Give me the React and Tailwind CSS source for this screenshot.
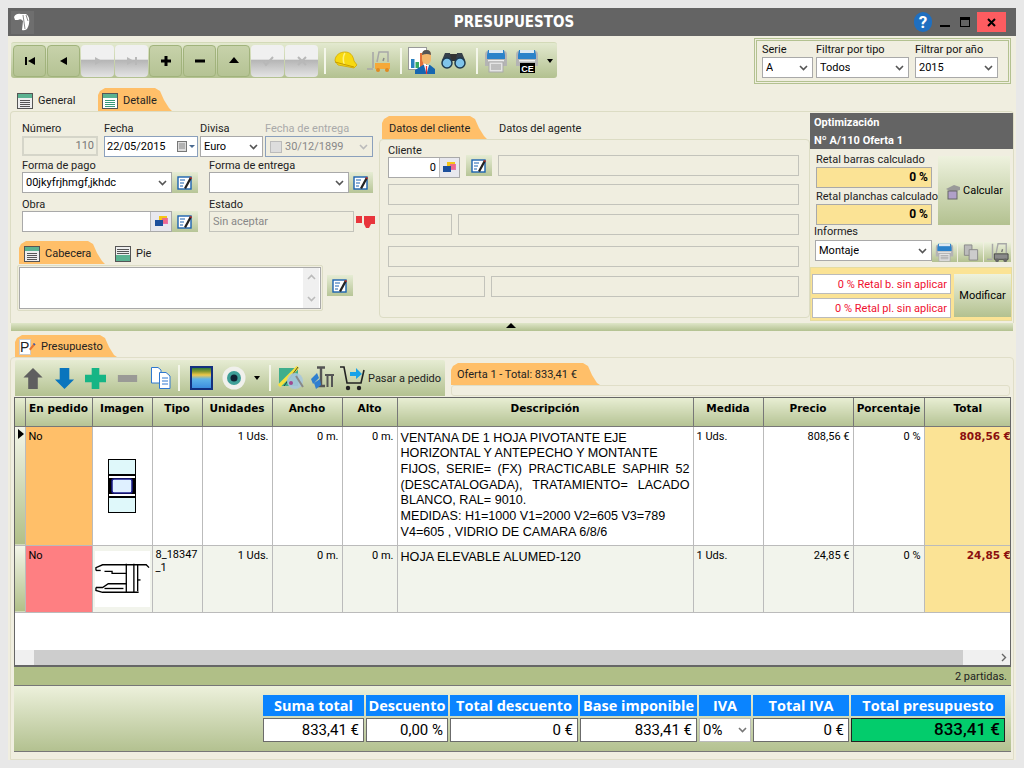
const fontBase = "font-['Roboto','Liberation_Sans',sans-serif]";

function TableIcon({ active, band = "top" }) {
  return (
    <svg width="16" height="16" viewBox="0 0 16 16" className="shrink-0">
      <rect x="0.5" y="0.5" width="15" height="15" fill={active ? "#fff" : "#eee"} stroke="#555" />
      {band === "top" && <rect x="1" y="1" width="14" height="4" fill="#5bb291" />}
      {band === "bottom" && <rect x="1" y="9" width="14" height="6" fill="#5bb291" />}
      {band === "top" ? (
        <path d="M3 7.5H13M3 9.5H13M3 11.5H13M3 13.5H13" stroke={active ? "#3a9a78" : "#555"} />
      ) : (
        <path d="M2 3.5H14M2 5.5H14M2 7.5H14" stroke="#555" />
      )}
    </svg>
  );
}

function EditIcon() {
  return (
    <svg width="16" height="14" viewBox="0 0 16 14">
      <rect x="1" y="1" width="13" height="12" fill="#fff" stroke="#1a62b0" strokeWidth="1.4" />
      <path d="M3 4H8M3 7H7M3 10H6" stroke="#1a62b0" />
      <path d="M7 12L13 1L15 2L9 13Z" fill="#222" />
      <path d="M13 1L15 2L14.5 3L12.5 2Z" fill="#d33" />
    </svg>
  );
}

function FolderIcon() {
  return (
    <svg width="13" height="11" viewBox="0 0 13 11">
      <path d="M4 0H12V7H4Z" fill="#f5c518" />
      <path d="M7 2H13V8H7Z" fill="#ec5aa0" opacity="0.85" />
      <path d="M0 4H8V10H0Z" fill="#1c4f9c" />
    </svg>
  );
}

function EditButton({ w = "w-[26px]" }) {
  return (
    <div className={`${w} h-[21px] flex items-center justify-center bg-linear-to-b from-[#e6ecd4] to-[#b7c597]`}>
      <EditIcon />
    </div>
  );
}

function Chevron({ color = "#555" }) {
  return (
    <svg width="9" height="6" viewBox="0 0 9 6" className="shrink-0">
      <path d="M1 1L4.5 4.5L8 1" fill="none" stroke={color} strokeWidth="1.6" />
    </svg>
  );
}

function Select({ className = "", children, color }) {
  return (
    <div className={`h-[21px] bg-white border border-[#a9a9a9] flex items-center justify-between pl-[3px] pr-[4px] text-[11px] text-black ${className}`}>
      <span className="truncate pt-[1px]">{children}</span>
      <Chevron color={color} />
    </div>
  );
}

function Empty({ className = "" }) {
  return <div className={`h-[21px] border border-[#c3c3bb] bg-[#f0eee0] ${className}`} />;
}

function NavButton({ children, off }) {
  return (
    <div
      className={
        off
          ? "w-[33px] h-[32px] rounded-[4px] flex items-center justify-center bg-[linear-gradient(#f0f0f0_0,#f0f0f0_45%,#b4b4b4_46%,#e4e4e4_100%)]"
          : "w-[33px] h-[32px] rounded-[4px] border border-[#a1b37c] flex items-center justify-center bg-linear-to-b from-[#c7d2aa] to-[#b5c394]"
      }
    >
      {children}
    </div>
  );
}

function Sep() {
  return <div className="w-[2px] h-[26px] bg-[#f4f6ea] shrink-0" />;
}

function Glyph({ d, fill = "#000", size = 14 }) {
  return (
    <svg width={size} height={size} viewBox="0 0 14 14">
      <path d={d} fill={fill} />
    </svg>
  );
}

function Helmet() {
  return (
    <svg width="24" height="19" viewBox="0 0 24 19">
      <path d="M1 10C1 4 6 1 11 1C16 1 19 4 20 10L23 14L20 17L15 16L4 14Z" fill="#f7d911" stroke="#d2a800" strokeWidth="0.8" />
      <path d="M11 2C9 5 9 9 10 13" fill="none" stroke="#fff27a" strokeWidth="1.5" />
      <path d="M1 11L20 16" fill="none" stroke="#c69a00" />
    </svg>
  );
}

function Forklift({ dim, size = 24 }) {
  return (
    <svg width={size} height={size} viewBox="0 0 24 24">
      <path d="M6 19V3" stroke="#a8a8a8" strokeWidth="1.6" />
      <path d="M0 20H6" stroke="#a8a8a8" strokeWidth="1.6" />
      <path d="M10 13L12 3H21V13" fill="none" stroke="#a8a8a8" strokeWidth="1.5" />
      <path d="M16 12L17 9" stroke={dim ? "#777" : "#888"} strokeWidth="1.5" />
      <path d="M8 14H23V20H8Z" fill={dim ? "#8a8a8a" : "#f5a938"} stroke={dim ? "#444" : "none"} />
      <circle cx="11" cy="21" r="2" fill={dim ? "#666" : "#e08a20"} />
      <circle cx="20" cy="21" r="2" fill={dim ? "#666" : "#e08a20"} />
    </svg>
  );
}

function ChartMan() {
  return (
    <svg width="28" height="28" viewBox="0 0 28 28">
      <rect x="0.5" y="0.5" width="18" height="22" fill="#fff" stroke="#999" />
      <rect x="3" y="12" width="3.5" height="9" fill="#2a80c0" />
      <rect x="7.5" y="15" width="3.5" height="6" fill="#36a860" />
      <rect x="12" y="6" width="3.5" height="15" fill="#e2703a" />
      <path d="M14 8Q14 3 18.5 3Q23 3 23 8V12Q23 17 18.5 17Q14 17 14 12Z" fill="#f3b76c" />
      <path d="M14 8Q14 3 18.5 3Q23 3 23 8Q19 6 14 8Z" fill="#555" />
      <path d="M7 27V23L15 18H22L27 22V27Z" fill="#1766b0" />
      <path d="M16 18L18.5 27L21 18Z" fill="#fff" />
      <path d="M18.5 19V27" stroke="#e33" strokeWidth="1.3" />
    </svg>
  );
}

function Binoculars() {
  return (
    <svg width="27" height="17" viewBox="0 0 27 17">
      <path d="M9 2H18V9H9Z" fill="#333" />
      <path d="M5 1H10L11 8H2Z M17 1H22L25 8H16Z" fill="#36404a" />
      <circle cx="7" cy="11" r="5" fill="#7fc4ea" stroke="#1e3a50" strokeWidth="1.5" />
      <circle cx="20" cy="11" r="5" fill="#7fc4ea" stroke="#1e3a50" strokeWidth="1.5" />
    </svg>
  );
}

function Printer({ ce, size = 24 }) {
  return (
    <svg width={size} height={size} viewBox="0 0 24 24">
      <path d="M1 6Q1 2 4 2H20Q23 2 23 6V17H1Z" fill="#b4b4b4" />
      <path d="M4 1H20L21 6V10H3V6Z" fill="#2c82c9" />
      <rect x="5" y="1" width="14" height="3" fill="#dce8f2" />
      <rect x="4" y="11" width="16" height="1.5" fill="#eee" />
      {ce ? (
        <>
          <rect x="5" y="14" width="15" height="10" fill="#000" />
          <text x="12.5" y="22.5" fontSize="9" fontWeight="bold" fill="#fff" textAnchor="middle" fontFamily="Liberation Sans">CE</text>
        </>
      ) : (
        <>
          <rect x="5" y="13" width="14" height="10" fill="#e4e4e4" stroke="#aaa" />
          <path d="M7 16H17M7 18H17M7 20H17" stroke="#999" />
        </>
      )}
    </svg>
  );
}

function Tab({ active, icon, children, className = "", text = "text-[#222]" }) {
  return (
    <div
      className={`h-full flex items-center gap-[5px] whitespace-nowrap pt-[3px] ${text} ${className} ${
        active
          ? "bg-[#ffbf69] [clip-path:polygon(0_100%,0_7px,2px_3px,7px_0,calc(100%_-_17px)_0,calc(100%_-_12px)_3px,calc(100%_-_8px)_12px,calc(100%_-_3px)_20px,100%_100%)]"
          : ""
      }`}
    >
      {icon}
      <span>{children}</span>
    </div>
  );
}

const thCols = [
  ["", 10],
  ["En pedido", 67],
  ["Imagen", 60],
  ["Tipo", 50],
  ["Unidades", 70],
  ["Ancho", 70],
  ["Alto", 55],
  ["Descripción", 296],
  ["Medida", 70],
  ["Precio", 90],
  ["Porcentaje", 71],
  ["Total", 87],
];

function WindowThumb() {
  return (
    <svg width="28" height="54" viewBox="0 0 28 54">
      <rect x="0.5" y="0.5" width="27" height="53" fill="#dff8fa" stroke="#000" />
      <rect x="1" y="15" width="26" height="24" fill="#000" />
      <rect x="1" y="17" width="26" height="2" fill="#fff" />
      <rect x="1" y="35" width="26" height="2" fill="#fff" />
      <rect x="4" y="20" width="20" height="14" rx="2" fill="#dff0ff" stroke="#1a1a8c" strokeWidth="1.5" />
    </svg>
  );
}

function ProfileThumb() {
  return (
    <svg width="58" height="34" viewBox="0 0 58 34" fill="none" stroke="#000" strokeWidth="1.4">
      <path d="M1 8V5L8 2H54L57 5" />
      <path d="M1 8H6" />
      <path d="M10 9H18V11H33" />
      <path d="M33 1V31M41 1V31M45 2V30" />
      <path d="M1 26V29L8 31H46" />
      <path d="M1 26H8L14 22H33" />
      <path d="M10 27H30" />
      <path d="M45 18H48" />
    </svg>
  );
}

function Cell({ children, right, className = "" }) {
  return (
    <td className={`align-top border-r border-b border-[#bbbbbb] px-[3px] pt-[2px] text-[11px] text-black ${right ? "text-right" : ""} ${className}`}>
      {children}
    </td>
  );
}

function Row({ h, color, bg, thumb, tipo, desc, medida, precio, total, marker }) {
  return (
    <tr className={bg} style={{ height: h }}>
      <td className="border-r border-b border-[#bbbbbb] p-0 bg-linear-to-b from-[#f4f6ea] to-[#b0bf87] align-top">
        {marker && (
          <svg width="8" height="12" viewBox="0 0 8 12" className="mt-[1px] ml-[2px]">
            <path d="M1 1L7 6L1 11Z" fill="#000" />
          </svg>
        )}
      </td>
      <Cell className={color}>No</Cell>
      <td className="border-r border-b border-[#bbbbbb] p-0 text-center align-middle">{thumb}</td>
      <Cell className="break-all leading-[13px]">{tipo}</Cell>
      <Cell right>1 Uds.</Cell>
      <Cell right>0 m.</Cell>
      <Cell right>0 m.</Cell>
      <Cell className="font-['Liberation_Sans',sans-serif] !text-[12.6px] leading-[15.7px] !pt-[4px] !pl-[3px]">{desc}</Cell>
      <Cell>{medida}</Cell>
      <Cell right>{precio}</Cell>
      <Cell right>0 %</Cell>
      <td className="align-top border-b border-[#bbbbbb] bg-[#fbe395] pt-[2px] text-right whitespace-nowrap overflow-hidden text-[10.5px] font-bold text-[#8a0f0f] font-['DejaVu_Sans',sans-serif] pr-0">
        {total}
      </td>
    </tr>
  );
}

function TotalCol({ w, label, value, children, className = "bg-white border-[#6b6b6b] text-black text-[15px]" }) {
  return (
    <div className={`${w} shrink-0 flex flex-col gap-[2px]`}>
      <div className="h-[21px] bg-[#0a84ff] text-white font-bold text-[14.5px] leading-[21px] text-center whitespace-nowrap overflow-hidden font-['Open_Sans','Noto_Sans',sans-serif]">
        {label}
      </div>
      {children || (
        <div className={`h-[24px] border flex items-center justify-end pr-[4px] ${className}`}>{value}</div>
      )}
    </div>
  );
}

export default function App() {
  return (
    <div className={`w-[1024px] h-[768px] overflow-hidden bg-[#e8e8e8] pt-[8px] px-[8px] ${fontBase}`}>
      <div className="w-[1008px] h-[752px] bg-[#f0eee0] flex flex-col text-[11px] text-[#222]">
        {/* title bar */}
        <div className="h-[28px] bg-[#646464] flex items-center shrink-0">
          <div className="w-[23px] h-[23px] ml-[3px] bg-[#6e6e6e] flex items-center justify-center">
            <svg width="20" height="20" viewBox="0 0 20 20">
              <path d="M1 5Q3 1 8 2H13Q15 3 16 6Q17 12 14 17Q11 19 9 18L10 9Q8 6 5 8L2 8Z" fill="#fff" />
              <path d="M10 3L12 17M13 3L15 9" stroke="#6e6e6e" strokeWidth="0.8" />
            </svg>
          </div>
          <div className="flex-1 text-center text-white font-bold text-[15px] font-['DejaVu_Sans_Condensed','DejaVu_Sans',sans-serif] pl-[80px]">
            PRESUPUESTOS
          </div>
          <div className="flex items-center mr-[10px]">
            <div className="w-[18px] h-[20px] rounded-full bg-[#1f6fc0] text-white font-bold text-[17px] leading-[20px] text-center">?</div>
            <div className="w-[10px] h-[2px] bg-black ml-[8px] mt-[8px]" />
            <div className="w-[10px] h-[10px] border border-black border-t-[3px] ml-[10px]" />
            <div className="w-[29px] h-[20px] bg-[#fd5c60] ml-[7px] flex items-center justify-center">
              <svg width="9" height="9" viewBox="0 0 9 9">
                <path d="M1 1L8 8M8 1L1 8" stroke="#000" strokeWidth="2" />
              </svg>
            </div>
          </div>
        </div>

        {/* toolbar row */}
        <div className="h-[52px] shrink-0 flex">
          <div className="ml-[3px] mt-[6px] w-[546px] h-[36px] rounded-[3px] bg-linear-to-b from-[#e3e9cf] to-[#b3c190] flex items-center pl-[2px] gap-[1px] border-t border-[#d3dab8]">
            <NavButton><Glyph d="M2 3H4V11H2ZM12 3V11L5 7Z" size={14} /></NavButton>
            <NavButton><Glyph d="M10 3V11L3 7Z" /></NavButton>
            <NavButton off><Glyph fill="#b8b8b8" d="M4 3V11L11 7Z" /></NavButton>
            <NavButton off><Glyph fill="#b8b8b8" d="M2 3V11L9 7ZM10 3H12V11H10Z" /></NavButton>
            <NavButton><Glyph d="M5.5 2H8.5V5.5H12V8.5H8.5V12H5.5V8.5H2V5.5H5.5Z" /></NavButton>
            <NavButton><Glyph d="M2 5.5H12V8.5H2Z" /></NavButton>
            <NavButton><Glyph d="M7 3L12 9H2Z" /></NavButton>
            <NavButton off><svg width="14" height="14" viewBox="0 0 14 14"><path d="M2 7L5 11L12 3" fill="none" stroke="#b8b8b8" strokeWidth="2" /></svg></NavButton>
            <NavButton off><svg width="14" height="14" viewBox="0 0 14 14"><path d="M3 3L11 11M11 3L3 11" fill="none" stroke="#b8b8b8" strokeWidth="2" /></svg></NavButton>
            <div className="ml-[5px]"><Sep /></div>
            <div className="ml-[7px]"><Helmet /></div>
            <div className="ml-[8px]"><Forklift /></div>
            <div className="ml-[8px]"><Sep /></div>
            <div className="ml-[5px]"><ChartMan /></div>
            <div className="ml-[3px]"><Binoculars /></div>
            <div className="ml-[8px]"><Sep /></div>
            <div className="ml-[5px]"><Printer /></div>
            <div className="ml-[6px]"><Printer ce /></div>
            <svg width="6" height="4" viewBox="0 0 6 4" className="ml-[7px]"><path d="M0 0H6L3 4Z" fill="#000" /></svg>
          </div>
          <div className="ml-auto mr-[5px] mt-[2px] w-[257px] h-[46px] border border-[#b3c190] p-[1px]">
            <div className="w-full h-full border border-[#b3c190] flex pl-[5px] pt-[3px] text-[#111]">
              <div className="w-[54px] flex flex-col">
                <span className="h-[13px] leading-[12px]">Serie</span>
                <Select className="w-[51px]">A</Select>
              </div>
              <div className="w-[99px] flex flex-col">
                <span className="h-[13px] leading-[12px]">Filtrar por tipo</span>
                <Select className="w-[93px]">Todos</Select>
              </div>
              <div className="w-[84px] flex flex-col">
                <span className="h-[13px] leading-[12px]">Filtrar por año</span>
                <Select className="w-[83px]">2015</Select>
              </div>
            </div>
          </div>
        </div>

        {/* upper tabs */}
        <div className="h-[23px] shrink-0 flex items-end pl-[9px]">
          <Tab icon={<TableIcon />} className="w-[81px]">General</Tab>
          <Tab active icon={<TableIcon active />} className="w-[74px] pl-[4px]">Detalle</Tab>
        </div>

        {/* upper panel */}
        <div className="h-[212px] shrink-0 mx-[2px] border-t border-x border-[#dcdcc4] rounded-t-[4px] flex">
          {/* left */}
          <div className="w-[368px] shrink-0 pl-[11px] pt-[9px]">
            <div className="flex">
              <div className="w-[82px]">
                <div className="h-[15px] leading-[16px]">Número</div>
                <div className="w-[76px] h-[20px] border-2 border-[#d5d5c9] bg-[#efeee0] text-right pr-[2px] leading-[16px] text-[#777]">110</div>
              </div>
              <div className="w-[96px]">
                <div className="h-[15px] leading-[16px]">Fecha</div>
                <div className="w-[94px] h-[21px] bg-white border border-[#8ba0bc] flex items-center pl-[2px] pr-[2px] text-black">
                  <span className="flex-1 text-[11px] pt-[1px]">22/05/2015</span>
                  <svg width="18" height="12" viewBox="0 0 18 12"><rect x="0.5" y="0.5" width="9" height="10" fill="#ddd" stroke="#777" /><path d="M2 3H8M2 5H8M2 7H8" stroke="#888" /><path d="M12 4H18L15 7Z" fill="#4a6a90" /></svg>
                </div>
              </div>
              <div className="w-[65px]">
                <div className="h-[15px] leading-[16px]">Divisa</div>
                <Select className="w-[63px]">Euro</Select>
              </div>
              <div className="w-[108px]">
                <div className="h-[15px] leading-[16px] text-[#aaa]">Fecha de entrega</div>
                <div className="w-[108px] h-[21px] border border-[#8ba0bc] flex items-center pl-[4px] pr-[4px] text-[#888]">
                  <div className="w-[12px] h-[12px] bg-[#ddd] border border-[#bbb] mr-[3px]" />
                  <span className="flex-1 pt-[1px]">30/12/1899</span>
                  <Chevron color="#bbb" />
                </div>
              </div>
            </div>

            <div className="flex mt-[1px]">
              <div className="w-[187px]">
                <div className="h-[14px] leading-[15px]">Forma de pago</div>
                <div className="flex">
                  <Select className="w-[150px]">00jkyfrjhmgf,jkhdc</Select>
                  <EditButton />
                </div>
              </div>
              <div>
                <div className="h-[14px] leading-[15px]">Forma de entrega</div>
                <div className="flex">
                  <Select className="w-[140px]"></Select>
                  <EditButton w="w-[24px]" />
                </div>
              </div>
            </div>

            <div className="flex mt-[4px]">
              <div className="w-[187px]">
                <div className="h-[14px] leading-[15px]">Obra</div>
                <div className="flex">
                  <div className="w-[150px] h-[21px] bg-white border border-[#a9a9a9] flex justify-end">
                    <div className="w-[21px] h-[19px] bg-[#e8e8ee] border-l border-[#bbb] flex items-center justify-center"><FolderIcon /></div>
                  </div>
                  <EditButton />
                </div>
              </div>
              <div>
                <div className="h-[14px] leading-[15px]">Estado</div>
                <div className="flex items-center">
                  <div className="w-[145px] h-[21px] border border-[#c3c3bb] pl-[3px] leading-[20px] text-[#888]">Sin aceptar</div>
                  <svg width="20" height="14" viewBox="0 0 20 14" className="ml-[2px]">
                    <path d="M0 1H6V8H0ZM8 1H19V9H15L13 13H10L8 9Z" fill="#e8353c" />
                  </svg>
                </div>
              </div>
            </div>

            <div className="h-[23px] mt-[9px] ml-[-3px] flex items-end">
              <Tab active icon={<TableIcon band="top" />} className="w-[86px] pl-[5px] text-[11px]">Cabecera</Tab>
              <Tab icon={<TableIcon band="bottom" />} className="ml-[10px]">Pie</Tab>
            </div>
            <div className="flex ml-[-5px] mt-[1px]">
              <div className="w-[306px] h-[46px] border border-[#dcdcc4] p-[1px] rounded-[2px]">
                <div className="w-full h-full bg-white border border-[#a9a9a9] flex justify-end pr-[1px]">
                  <div className="w-[16px] h-full bg-[#f0f0f0] flex flex-col justify-between items-center py-[6px]">
                    <svg width="9" height="6" viewBox="0 0 9 6"><path d="M1 5L4.5 1.5L8 5" fill="none" stroke="#bbb" strokeWidth="1.6" /></svg>
                    <Chevron color="#bbb" />
                  </div>
                </div>
              </div>
              <div className="ml-[4px] mt-[10px]"><EditButton /></div>
            </div>
          </div>

          {/* middle */}
          <div className="w-[431px] shrink-0 pt-[4px]">
            <div className="h-[23px] flex items-end pl-[3px] text-[#222]">
              <Tab active className="w-[105px] pl-[7px]">Datos del cliente</Tab>
              <Tab className="ml-[12px]">Datos del agente</Tab>
            </div>
            <div className="h-[179px] border border-[#dcdcc4] rounded-[4px] px-[8px] pt-[3px]">
              <div className="h-[13px] leading-[16px]">Cliente</div>
              <div className="flex items-start">
                <div className="w-[72px] h-[21px] mt-[1px] bg-white border border-[#a9a9a9] flex items-center justify-end text-black">
                  <span className="pr-[3px] pt-[1px]">0</span>
                  <div className="w-[20px] h-[19px] bg-[#e8e8ee] border-l border-[#bbb] flex items-center justify-center"><FolderIcon /></div>
                </div>
                <div className="ml-[6px] mt-[-1px]"><EditButton /></div>
                <Empty className="ml-[6px] w-[301px] mt-[-1px]" />
              </div>
              <Empty className="mt-[6px] w-[411px]" />
              <div className="flex mt-[9px] gap-[6px]">
                <Empty className="w-[64px]" />
                <Empty className="w-[341px]" />
              </div>
              <Empty className="mt-[11px] w-[411px]" />
              <div className="flex mt-[9px] gap-[6px]">
                <Empty className="w-[97px]" />
                <Empty className="w-[308px]" />
              </div>
            </div>
          </div>

          {/* right */}
          <div className="flex-1 pt-[1px]">
            <div className="w-[203px] h-[36px] bg-[#646464] text-white font-bold text-[11px] leading-[18px] pl-[4px] pt-[1px]">
              <div>Optimización</div>
              <div>Nº A/110 Oferta 1</div>
            </div>
            <div className="flex pl-[6px]">
              <div className="w-[122px]">
                <div className="h-[18px] leading-[22px] whitespace-nowrap">Retal barras calculado</div>
                <div className="w-[116px] h-[21px] bg-[#fbe395] border border-[#a9a9a9] text-right pr-[3px] font-bold text-black text-[12px] leading-[19px]">0 %</div>
                <div className="h-[16px] leading-[17px] whitespace-nowrap">Retal planchas calculado</div>
                <div className="w-[116px] h-[21px] bg-[#fbe395] border border-[#a9a9a9] text-right pr-[3px] font-bold text-black text-[12px] leading-[19px]">0 %</div>
              </div>
              <div className="w-[72px] h-[69px] mt-[7px] pt-[2px] bg-linear-to-b from-[#eef2de] to-[#b3c190] flex items-center justify-center gap-[2px] text-black">
                <svg width="16" height="16" viewBox="0 0 16 16"><path d="M1 5L9 1L15 3V6L7 8Z" fill="#999" /><rect x="3" y="7" width="9" height="8" fill="#b0a0c8" stroke="#666" /></svg>
                <span>Calcular</span>
              </div>
            </div>
            <div className="pl-[4px] h-[14px] leading-[14px]">Informes</div>
            <div className="flex pl-[5px]">
              <Select className="w-[117px] mt-[1px]">Montaje</Select>
              <div className="flex mt-[3px]">
                <div className="w-[25px] h-[20px] bg-linear-to-b from-[#eef2de] to-[#b3c190] flex items-center justify-center overflow-hidden"><Printer size={19} /></div>
                <div className="ml-[1px] w-[25px] h-[20px] bg-linear-to-b from-[#eef2de] to-[#b3c190] flex items-center justify-center">
                  <svg width="16" height="17" viewBox="0 0 16 18"><path d="M1 1H9V12H1Z" fill="#bbb" stroke="#888" /><path d="M6 6H15V17H6Z" fill="#ccc" stroke="#888" /></svg>
                </div>
                <div className="ml-[1px] w-[27px] h-[20px] bg-linear-to-b from-[#eef2de] to-[#b3c190] flex items-center justify-center overflow-hidden"><Forklift dim size={22} /></div>
              </div>
            </div>
            <div className="w-[202px] h-[54px] mt-[5px] bg-[#fbe395] border border-[#e5dca0] flex pl-[1px] pt-[6px]">
              <div className="w-[140px] flex flex-col gap-[4px]">
                <div className="w-[139px] h-[20px] bg-white border border-[#bbb] text-right pr-[3px] leading-[19px] text-[#f01030] whitespace-nowrap">0 % Retal b. sin aplicar</div>
                <div className="w-[139px] h-[20px] bg-white border border-[#bbb] text-right pr-[3px] leading-[19px] text-[#f01030] whitespace-nowrap">0 % Retal pl. sin aplicar</div>
              </div>
              <div className="ml-[2px] w-[57px] h-[43px] pt-[2px] bg-linear-to-b from-[#eef2de] to-[#b3c190] flex items-center justify-center text-black">Modificar</div>
            </div>
          </div>
        </div>

        {/* splitter */}
        <div className="h-[8px] shrink-0 mx-[3px] bg-linear-to-b from-[#dfe6c8] to-[#b3c190] flex justify-center pr-[2px]">
          <svg width="10" height="5" viewBox="0 0 10 5"><path d="M5 0L10 5H0Z" fill="#000" /></svg>
        </div>

        {/* lower tab */}
        <div className="h-[22px] shrink-0 mt-[4px] flex items-end pl-[7px]">
          <Tab
            active
            className="w-[102px] pl-[4px] text-[11px]"
            icon={
              <svg width="17" height="17" viewBox="0 0 17 17" className="shrink-0">
                <rect x="0.5" y="0.5" width="11" height="15" fill="#fff" stroke="#ccc" />
                <text x="1" y="13" fontSize="14" fill="#222" fontFamily="Liberation Sans">P</text>
                <path d="M10 10L15 4L16.5 5.5L11.5 11.5Z" fill="#e8752f" />
                <path d="M15 4L16.5 5.5L15.5 6.5L14 5Z" fill="#2b62c0" />
              </svg>
            }
          >
            Presupuesto
          </Tab>
        </div>

        {/* lower panel */}
        <div className="flex-1 mx-[2px] border border-[#e0dec8] rounded-t-[4px] pl-[3px] pt-[2px] pr-[2px] flex flex-col min-h-0">
          <div className="h-[37px] shrink-0 flex">
            <div className="ml-[1px] w-[430px] h-[36px] bg-linear-to-b from-[#e6ecd3] to-[#b3c190] flex items-center pl-[7px] rounded-t-[2px]">
              <svg width="22" height="23" viewBox="0 0 22 24"><path d="M11 1L21 11H16V23H6V11H1Z" fill="#5f5f5f" /></svg>
              <svg width="23" height="23" viewBox="0 0 22 24" className="ml-[9px]"><path d="M6 1H16V13H21L11 23L1 13H6Z" fill="#0a75bd" /></svg>
              <svg width="21" height="21" viewBox="0 0 22 22" className="ml-[9px]"><path d="M7 0H15V7H22V15H15V22H7V15H0V7H7Z" fill="#16b585" /></svg>
              <svg width="21" height="7" viewBox="0 0 22 8" className="ml-[11px]"><rect width="22" height="8" fill="#9a9a96" /></svg>
              <svg width="22" height="24" viewBox="0 0 22 24" className="ml-[12px]" fill="#fff" stroke="#2f78d0"><path d="M1.5 1.5H8L11 4V17H1.5Z" /><path d="M9.5 6.5H16L20 10V22.5H9.5Z" /><path d="M12 12H18M12 15H18M12 18H18" fill="none" /></svg>
              <div className="ml-[6px]"><Sep /></div>
              <div className="ml-[10px] w-[23px] h-[24px] bg-[#12307f] p-[2px]"><div className="w-full h-full bg-[linear-gradient(#2d7a3a_0,#8a9a30_18%,#f2c84a_35%,#5fb4e8_55%,#3d8fe0_100%)]" /></div>
              <svg width="24" height="24" viewBox="0 0 24 24" className="ml-[9px]"><circle cx="12" cy="12" r="11.5" fill="#f0f0ec" /><circle cx="12" cy="12" r="7" fill="#3f9f98" /><circle cx="12" cy="12" r="3.5" fill="#123" /></svg>
              <svg width="6" height="4" viewBox="0 0 6 4" className="ml-[8px]"><path d="M0 0H6L3 4Z" fill="#000" /></svg>
              <div className="ml-[9px]"><Sep /></div>
              <svg width="26" height="24" viewBox="0 0 26 24" className="ml-[7px]"><rect x="1" y="2" width="19" height="18" fill="#3fae8c" /><path d="M1 20L20 1" stroke="#f5e040" strokeWidth="3.5" /><path d="M20 1L6 20" stroke="#222" strokeWidth="0.8" /><circle cx="17" cy="15" r="8" fill="#a8c8dc" opacity="0.9" /><circle cx="13" cy="17" r="2" fill="#a04a90" /><path d="M18 10L25 21" stroke="#888" strokeWidth="2" /></svg>
              <svg width="24" height="24" viewBox="0 0 24 24" className="ml-[6px]" fill="none"><path d="M7 1.5H15M11 1.5V20M7 20H15" stroke="#555" strokeWidth="2.4" /><path d="M15 9H24M17.5 9V21M22 9V21" stroke="#555" strokeWidth="2" /><path d="M1 13L7 7L9 12L3 18ZM4 17L10 13L11 19L6 23Z" fill="#2f7fd0" /></svg>
              <svg width="26" height="26" viewBox="0 0 26 26" className="ml-[5px]"><path d="M1 2H5L8 18H22L25 5" fill="none" stroke="#222" strokeWidth="1.6" /><path d="M11 7H17V3L23 9L17 14V11H11Z" fill="#17a2e8" /><circle cx="9" cy="23" r="2.2" fill="#222" /><circle cx="20" cy="23" r="2.2" fill="#222" /></svg>
              <span className="ml-[3px] mt-[3px] text-[#222] whitespace-nowrap">Pasar a pedido</span>
            </div>
            <div className="ml-[6px] w-[559px]">
              <div className="h-[22px] mt-[3px]">
                <Tab active className="w-[149px] pl-[6px] text-[#222]">Oferta 1 - Total: 833,41 €</Tab>
              </div>
              <div className="h-[11px] border border-[#e0dec8] rounded-[3px]" />
            </div>
          </div>

          {/* table + footer */}
          <div className="w-[997px] h-[270px] shrink-0 border border-[#666] bg-white flex flex-col">
            <div className="h-[252px] overflow-hidden">
              <table className="table-fixed border-collapse w-[996px]">
                <colgroup>
                  {thCols.map(([n, w], i) => (
                    <col key={i} style={{ width: w }} />
                  ))}
                </colgroup>
                <thead>
                  <tr className="h-[28px]">
                    {thCols.map(([n], i) => (
                      <th
                        key={i}
                        className={`p-0 pb-[6px] bg-linear-to-b from-[#e8eed3] to-[#b5c394] border-b border-[#777] text-[10.5px] font-bold text-black font-['DejaVu_Sans',sans-serif] whitespace-nowrap ${
                          i < 11 ? "border-r" : ""
                        } border-[#777]`}
                      >
                        {n}
                      </th>
                    ))}
                  </tr>
                </thead>
                <tbody>
                  <Row
                    marker
                    h={119}
                    color="bg-[#ffbf69]"
                    bg="bg-white"
                    thumb={<div className="flex justify-center"><WindowThumb /></div>}
                    tipo=""
                    desc={
                      <div>
                        VENTANA DE 1 HOJA PIVOTANTE EJE
                        <br />
                        HORIZONTAL Y ANTEPECHO Y MONTANTE
                        <div className="text-justify">FIJOS, SERIE= (FX) PRACTICABLE SAPHIR 52 (DESCATALOGADA), TRATAMIENTO= LACADO BLANCO, RAL= 9010.</div>
                        MEDIDAS: H1=1000 V1=2000 V2=605 V3=789
                        <br />
                        V4=605 , VIDRIO DE CAMARA 6/8/6
                      </div>
                    }
                    medida="1 Uds."
                    precio="808,56 €"
                    total="808,56 €"
                  />
                  <Row
                    h={67}
                    color="bg-[#fe7f82]"
                    bg="bg-[#f2f4ec]"
                    thumb={
                      <div className="mx-[2px] h-[56px] bg-white flex items-center justify-center">
                        <ProfileThumb />
                      </div>
                    }
                    tipo="8_18347_1"
                    desc="HOJA ELEVABLE ALUMED-120"
                    medida="1 Uds."
                    precio="24,85 €"
                    total="24,85 €"
                  />
                </tbody>
              </table>
            </div>
            <div className="h-[16px] shrink-0 bg-[#f0f0f0] flex border-b border-[#666]">
              <div className="ml-[19px] w-[929px] bg-[#cdcdcd]" />
              <div className="flex-1 flex justify-end items-center pr-[3px]">
                <svg width="6" height="9" viewBox="0 0 6 9"><path d="M1 1L4.5 4.5L1 8" fill="none" stroke="#666" strokeWidth="1.4" /></svg>
              </div>
            </div>
          </div>

          <div className="w-[997px] h-[19px] shrink-0 bg-[#b0bf87] border-b border-[#777] text-right pr-[4px] text-[11px] leading-[20px] text-[#222]">2 partidas.</div>

          <div className="w-[997px] h-[66px] shrink-0 bg-linear-to-b from-[#edf1dc] to-[#b3c190] border-b border-[#777] flex gap-[2px] pl-[249px] pt-[9px]">
            <TotalCol w="w-[101px]" label="Suma total" value="833,41 €" />
            <TotalCol w="w-[82px]" label="Descuento" value="0,00 %" />
            <TotalCol w="w-[128px]" label="Total descuento" value="0 €" />
            <TotalCol w="w-[117px]" label="Base imponible" value="833,41 €" />
            <TotalCol w="w-[52px]" label="IVA">
              <div className="h-[24px] bg-white border border-[#bbb] flex items-center justify-between pl-[3px] pr-[3px] text-[15px] text-black">
                <span>0%</span>
                <Chevron color="#777" />
              </div>
            </TotalCol>
            <TotalCol w="w-[96px]" label="Total IVA" value="0 €" />
            <TotalCol w="w-[154px]" label="Total presupuesto" value="833,41 €" className="bg-[#03cc6c] border-[#222] text-black font-medium text-[17px]" />
          </div>
        </div>
      </div>
    </div>
  );
}
